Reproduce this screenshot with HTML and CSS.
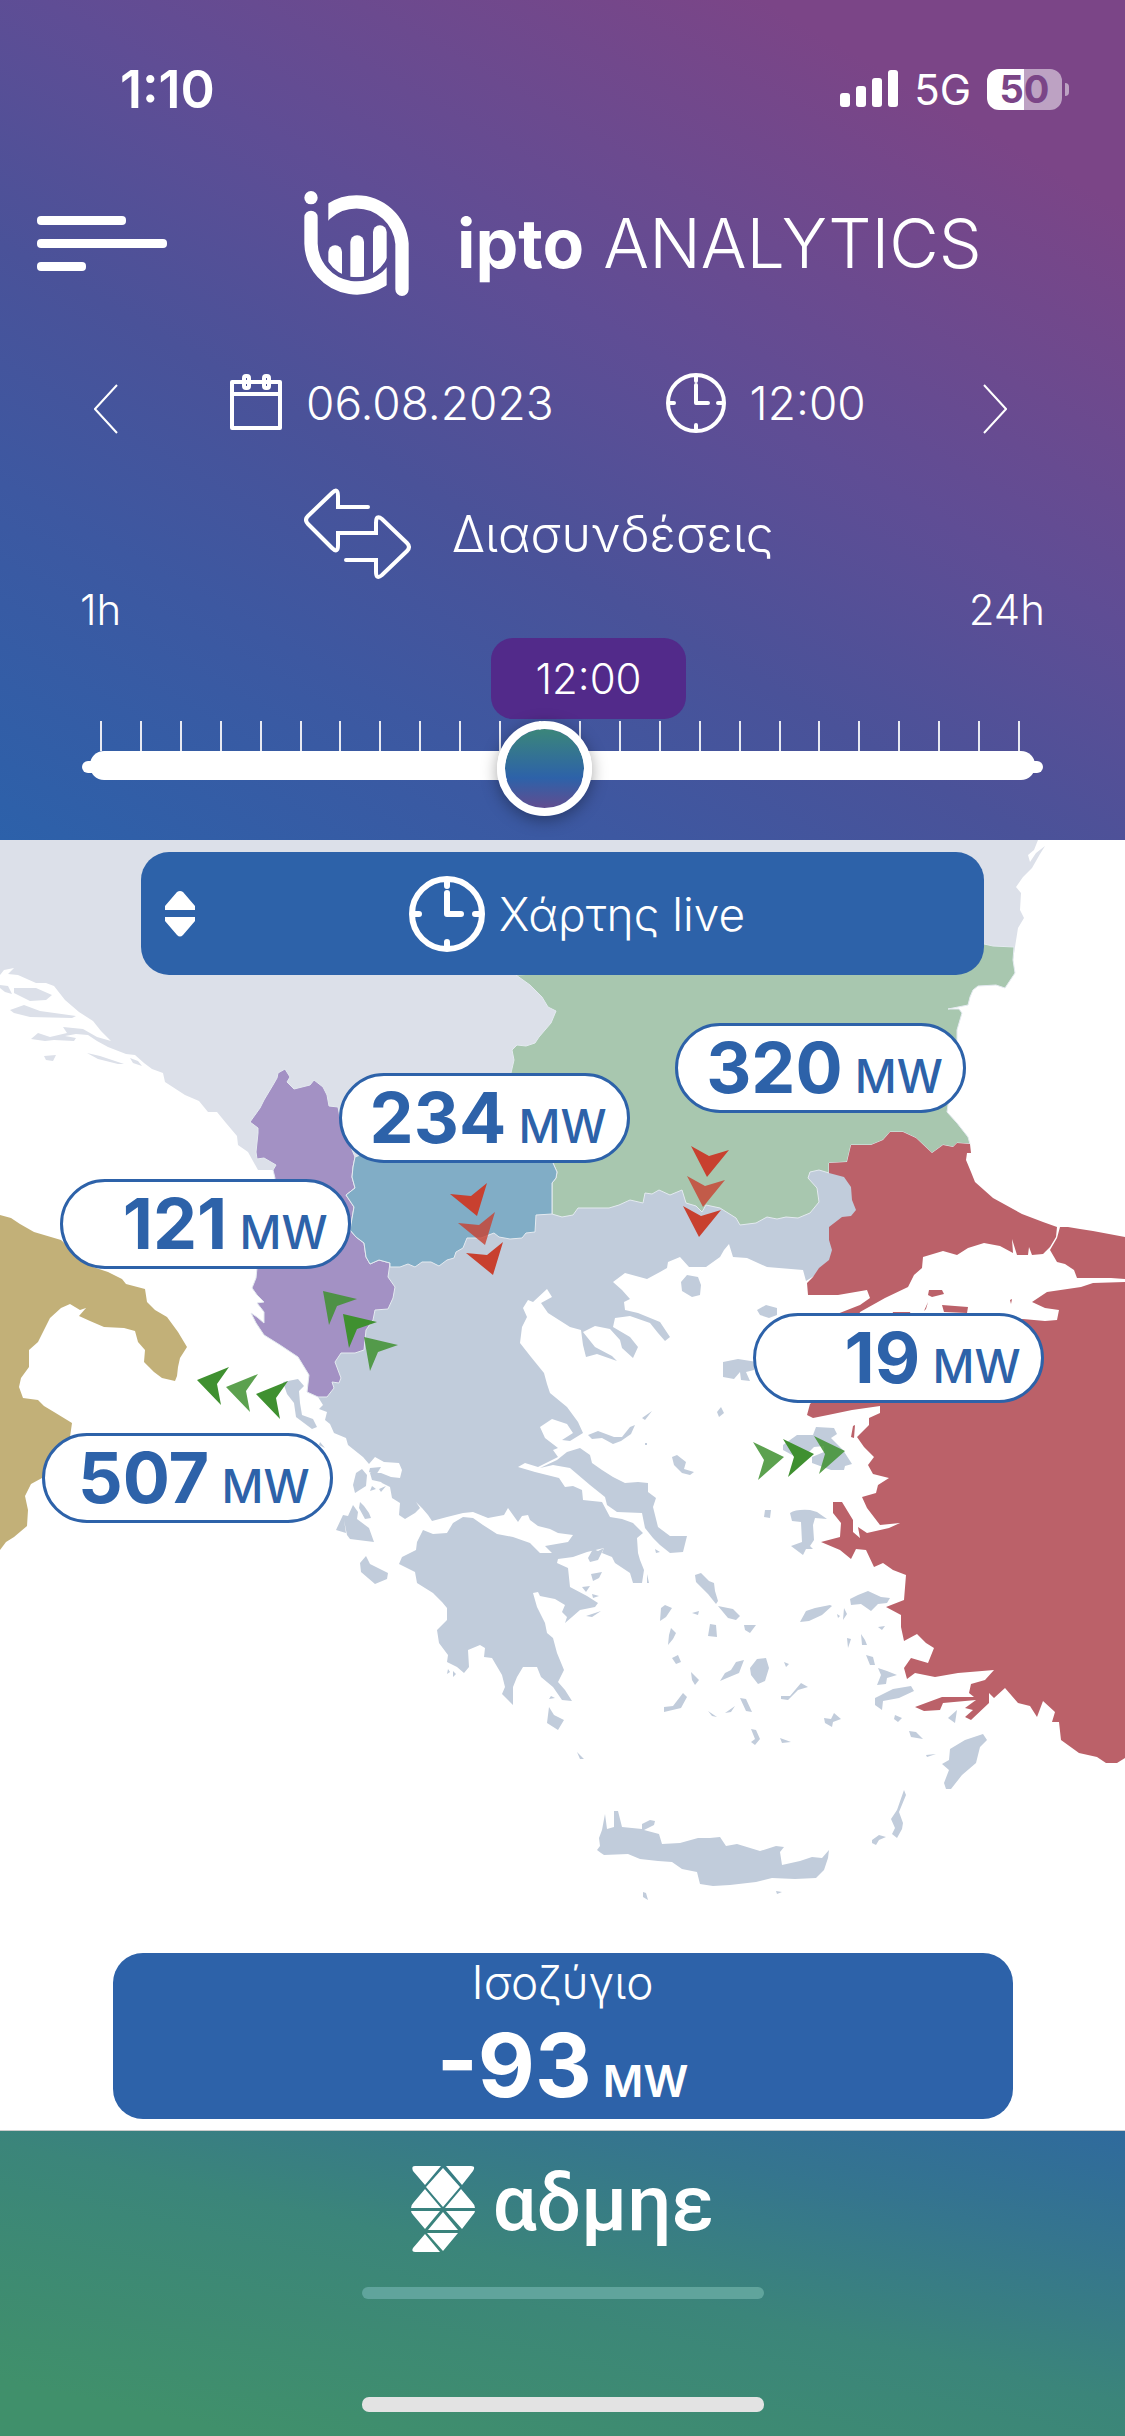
FILE: index.html
```html
<!DOCTYPE html>
<html lang="el">
<head>
  <meta charset="UTF-8" />
  <meta name="viewport" content="width=device-width, initial-scale=1.0" />
  <title>ipto ANALYTICS</title>
  <link rel="stylesheet" href="styles.css">
</head>
<body>
  <header class="header">
    <div class="status">
      <span class="status-time">1:10</span>
      <div class="status-right">
        <svg class="signal" viewBox="0 0 58 38" fill="#fff">
          <rect x="0" y="23" width="10" height="14" rx="3"/>
          <rect x="16" y="16" width="10" height="21" rx="3"/>
          <rect x="32" y="8" width="10" height="29" rx="3"/>
          <rect x="48" y="0" width="10" height="37" rx="3"/>
        </svg>
        <span class="network">5G</span>
        <span class="battery">50</span>
      </div>
    </div>

    <div class="brand">
      <button class="menu-btn" aria-label="Menu"><span></span><span></span><span></span></button>
      <svg class="brand-logo" viewBox="72 63 315 315">
        <defs>
          <clipPath id="stem"><rect x="60" y="100" width="260" height="300"/></clipPath>
          <clipPath id="arch"><rect x="145" y="50" width="260" height="350"/></clipPath>
          <clipPath id="bowl"><path d="M120 120H340V221H331A101 101 0 0 1 129 221H120Z"/></clipPath>
        </defs>
        <circle cx="93" cy="83" r="20" fill="#fff"/>
        <g fill="none" stroke="#fff" stroke-width="40" stroke-linecap="round">
          <path clip-path="url(#stem)" d="M93 142V221A137 137 0 0 0 360 260"/>
          <path clip-path="url(#arch)" d="M93 221A137 137 0 0 1 366 221V358"/>
        </g>
        <g fill="#fff" clip-path="url(#bowl)">
          <rect x="145" y="226" width="41" height="120" rx="20"/>
          <rect x="211" y="196" width="41" height="150" rx="20"/>
          <rect x="279" y="166" width="41" height="180" rx="20"/>
        </g>
      </svg>
      <h1><b>ipto</b> ANALYTICS</h1>
    </div>

    <nav class="date-nav">
      <button class="chevron" aria-label="Previous">
        <svg viewBox="0 0 24 50"><path d="M23 1 1 25 23 49"/></svg>
      </button>
      <button class="pick date">
        <svg class="icon-cal" viewBox="0 0 52 58">
          <path d="M2 8H50V54H2ZM2 20H50"/>
          <rect x="14" y="2" width="5" height="12" rx="2"/>
          <rect x="34" y="2" width="5" height="12" rx="2"/>
        </svg>
        06.08.2023
      </button>
      <button class="pick time">
        <svg class="icon-clock" viewBox="0 0 60 60">
          <circle cx="30" cy="30" r="28"/>
          <path d="M30 3V8M30 52V57M3 30H8M52 30H57M30 12V30H42"/>
        </svg>
        12:00
      </button>
      <button class="chevron next" aria-label="Next">
        <svg viewBox="0 0 24 50"><path d="M1 1 23 25 1 49"/></svg>
      </button>
    </nav>

    <div class="section-title">
      <svg viewBox="304 489 108 92">
        <path d="M368 508H338V497Q338 488 332 494L308 517Q304 521 308 525L332 549Q338 555 338 546V534H376V524Q376 515 382 520L407 544Q411 548 407 552L382 576Q376 581 376 573V561H346"/>
      </svg>
      <h2>Διασυνδέσεις</h2>
    </div>

    <div class="slider">
      <div class="slider-labels"><span>1h</span><span>24h</span></div>
      <output class="bubble" for="hour">12:00</output>
      <div class="ticks"></div>
      <div class="track">
        <input type="range" id="hour" min="1" max="24" value="12" aria-label="Ώρα">
      </div>
    </div>
  </header>

  <main class="map">
    <svg class="map-svg" viewBox="0 840 1125 1290">
      <!-- neighbours to the north -->
      <g fill="#dce0e9">
        <path d="M0 840H1038L1034 850 1028 855 1030 862 1036 853 1045 846 1040 854 1032 868 1023 877 1016 887 1021 893 1020 910 1024 918 1018 928 1015 947 1010 980H600V1170H258L248 1152 238 1145 237 1136 226 1123 217 1112 208 1112 199 1101 185 1095 165 1082 163 1073 152 1069 144 1063 135 1055 126 1054 108 1047 97 1041 88 1035 76 1034 65 1036 76 1038 74 1041 54 1040 45 1041 31 1039 38 1033 50 1037 67 1033 63 1027 83 1029 97 1037 111 1041 101 1031 93 1021 79 1012 65 1000 54 986 46 983 36 983 18 975 8 974 14 968 4 970 0 975Z"/>
        <path d="M0 985 8 986 12 994 5 992 0 988ZM14 988 36 988 52 995 46 1000 30 1001 14 993ZM10 1010 24 1005 40 1011 76 1016 72 1018 30 1017 14 1013ZM44 1056 56 1055 53 1061 46 1060ZM87 1053 100 1056 124 1064 118 1064 98 1059ZM130 1058 138 1061 142 1066 133 1063Z"/>
      </g>

      <!-- Italy -->
      <path fill="#c2b078" d="M0 1215 11 1218 20 1224 34 1232 61 1240 72 1250 93 1267 108 1272 122 1279 126 1284 145 1289 147 1302 155 1310 167 1317 178 1332 187 1347 180 1358 178 1367 177 1376 175 1381 162 1378 154 1372 144 1362 145 1350 138 1342 135 1331 124 1328 104 1327 90 1321 79 1316 86 1308 80 1310 70 1304 61 1308 50 1318 38 1342 29 1350 29 1367 21 1378 19 1387 23 1398 38 1400 44 1406 54 1412 72 1423 70 1437 60 1462 42 1478 31 1484 25 1496 28 1510 27 1526 14 1537 6 1542 0 1550Z"/>

      <!-- Greece, mainland -->
      <path fill="#c1ccdb" d="M318 1397 323 1405 319 1409 327 1412 325 1420 330 1424 334 1433 346 1438 348 1445 363 1457 369 1464 375 1457 384 1462 399 1463 402 1470 400 1478 391 1477 381 1473 370 1473 372 1480 381 1482 382 1483 390 1487 392 1498 400 1503 399 1515 405 1519 415 1513 420 1508 416 1502 422 1508 428 1515 432 1521 447 1517 463 1513 473 1512 488 1518 504 1515 508 1508 513 1515 518 1522 522 1516 528 1515 530 1520 538 1526 550 1529 558 1533 573 1535 568 1542 545 1546 552 1553 540 1553 530 1543 513 1537 497 1534 483 1525 473 1518 463 1517 453 1523 447 1533 433 1534 423 1530 417 1542 416 1550 402 1557 399 1564 415 1572 417 1583 433 1593 442 1602 447 1608 447 1620 437 1630 439 1643 448 1655 447 1662 457 1667 464 1673 469 1667 468 1650 480 1645 485 1648 484 1657 492 1658 502 1675 505 1687 502 1694 513 1705 513 1687 517 1677 523 1667 537 1667 541 1677 553 1687 562 1700 572 1701 565 1690 558 1682 564 1670 557 1653 553 1638 547 1633 545 1623 537 1607 533 1593 538 1592 540 1596 555 1599 565 1605 562 1612 567 1617 565 1623 572 1617 580 1610 595 1607 598 1603 587 1596 570 1587 568 1568 557 1563 558 1559 573 1557 587 1552 604 1548 602 1553 612 1557 615 1563 630 1573 633 1583 642 1583 644 1570 640 1560 638 1553 637 1538 643 1533 633 1523 622 1519 610 1517 602 1502 583 1500 582 1490 573 1486 565 1487 559 1478 535 1472 518 1467 525 1463 538 1467 558 1457 553 1450 558 1448 545 1438 540 1427 552 1419 567 1424 573 1433 562 1440 570 1441 583 1433 578 1422 567 1407 550 1393 547 1384 544 1373 531 1357 520 1343 522 1327 527 1317 523 1308 528 1300 533 1302 547 1289 552 1297 541 1303 548 1313 570 1327 581 1330 583 1345 586 1357 597 1354 617 1361 612 1356 595 1347 583 1332 595 1326 610 1329 620 1340 622 1348 633 1358 638 1347 630 1337 613 1327 615 1318 630 1316 650 1323 658 1333 665 1341 670 1337 660 1322 638 1313 625 1310 624 1302 630 1299 622 1290 613 1282 625 1273 647 1279 660 1272 667 1268 668 1262 680 1257 689 1267 706 1267 720 1257 724 1250 729 1244 733 1257 747 1258 767 1267 803 1270 806 1281 840 1260 880 1200 870 1160 560 1150 380 1220 330 1330Z"/>

      <!-- Evia -->
      <path fill="#c1ccdb" d="M540 1468 557 1460 567 1452 580 1448 590 1455 592 1463 602 1470 613 1477 625 1483 638 1482 648 1483 648 1492 656 1498 653 1507 658 1527 670 1536 687 1536 683 1552 670 1553 660 1545 653 1538 645 1528 642 1513 617 1512 607 1505 605 1497 590 1485 570 1468 553 1465Z"/>

      <!-- islands -->
      <g fill="#c1ccdb">
        <path d="M605 1814 602 1830 599 1838 600 1846 597 1850 601 1853 604 1855 628 1854 640 1859 658 1861 672 1862 682 1869 697 1872 700 1884 713 1886 730 1885 756 1882 772 1878 795 1879 816 1878 824 1870 828 1858 829 1850 822 1858 812 1857 800 1861 782 1865 780 1852 784 1847 776 1846 760 1851 737 1844 726 1846 720 1837 710 1838 698 1838 680 1843 662 1844 659 1834 644 1830 654 1825 655 1821 650 1820 642 1824 642 1829 622 1827 618 1811 614 1811 614 1827 607 1829Z"/>
        <path d="M283 1382 298 1379 304 1386 299 1391 300 1403 302 1415 313 1419 317 1427 312 1429 296 1417 294 1403 287 1394ZM320 1442 325 1448 319 1445Z"/>
        <path d="M362 1469 367 1475 366 1486 355 1493 353 1485 356 1473ZM370 1468 381 1467 376 1475 369 1472ZM372 1486 376 1489 370 1491ZM379 1489 386 1486 381 1492ZM360 1502 364 1506 369 1513 371 1518 365 1519 359 1508ZM353 1505 358 1512 357 1519 369 1528 374 1542 350 1539 347 1535 344 1520 346 1533 336 1530 343 1515 348 1516Z"/>
        <path d="M366 1556 370 1564 388 1573 387 1579 375 1584 361 1572 360 1563ZM448 1669 450 1672 447 1674ZM453 1671 456 1674 453 1677ZM551 1696 555 1698 549 1699ZM549 1707 554 1715 564 1720 558 1730 547 1723ZM577 1752 584 1759 580 1759Z"/>
        <path d="M588 1435 598 1431 614 1437 622 1437 630 1427 635 1425 631 1434 621 1441 613 1444 602 1438 592 1439ZM642 1418 652 1411 645 1420ZM672 1457 677 1455 686 1462 684 1469 694 1472 690 1475 682 1473 674 1465ZM717 1412 721 1407 724 1413 719 1417ZM645 1443h2v2h-2Z"/>
        <path d="M681 1282 687 1275 698 1277 701 1285 700 1295 692 1297 682 1291ZM757 1310 766 1305 777 1308 777 1315 769 1318 760 1315ZM723 1362 738 1359 757 1362 754 1370 746 1372 750 1381 741 1380 740 1372 734 1379 723 1377Z"/>
        <path d="M783 1445 797 1435 813 1435 816 1427 834 1428 837 1434 831 1438 843 1450 852 1464 845 1466 844 1470 831 1470 812 1463 812 1457 824 1452 824 1446 814 1447 806 1455 794 1456 783 1450Z"/>
        <path d="M790 1513Q796 1509 810 1510L817 1512 827 1519 815 1518 813 1525 814 1540 810 1546 813 1549 806 1549 803 1555 791 1546 802 1542 801 1522 792 1521ZM765 1510 771 1510 770 1518 764 1517Z"/>
        <path d="M695 1575 701 1573 709 1581 714 1583 715 1591 718 1601 716 1604 708 1594 696 1582ZM718 1606 733 1609 740 1616 736 1620 728 1618ZM665 1605 672 1608 666 1617 660 1621 661 1608ZM692 1613 699 1611 698 1615ZM710 1624 716 1625 717 1637 708 1636ZM744 1625 756 1625 750 1633 745 1630ZM671 1628 676 1633 673 1639 668 1645 669 1635ZM672 1658 678 1655 681 1662 676 1664ZM691 1672 699 1680 695 1685 692 1680Z"/>
        <path d="M725 1673 731 1670 736 1662 744 1660 739 1673 727 1678 720 1681ZM750 1668 757 1659 766 1658 769 1668 765 1681 758 1684 751 1675ZM664 1707 673 1706 683 1693 687 1697 681 1708 664 1712ZM708 1711 717 1717 712 1716ZM725 1713 735 1706 731 1712ZM740 1698 746 1699 752 1712 746 1711ZM781 1696 790 1696 801 1683 808 1687 798 1690 788 1700 781 1699ZM784 1662 789 1664 786 1667ZM751 1729 756 1730 760 1739 755 1745 751 1742 755 1739ZM780 1738 791 1742 782 1743ZM824 1718 831 1719 834 1713 841 1719 833 1722 832 1727 825 1723Z"/>
        <path d="M800 1622 806 1611 815 1608 830 1605 832 1606 822 1615 809 1621ZM850 1599 858 1595 868 1591 881 1597 890 1598 887 1603 878 1604 871 1611 861 1604 851 1605ZM844 1608 847 1614 843 1620ZM837 1614 840 1616 838 1618ZM847 1638 851 1639 848 1648ZM861 1634 865 1640 867 1645 862 1645ZM878 1627 885 1626 882 1630ZM866 1655 873 1657 875 1665 870 1665ZM878 1668 887 1671 897 1675 887 1678 886 1684 877 1685 881 1675ZM875 1698 893 1689 911 1686 914 1691 899 1698 883 1701 882 1710 875 1705ZM895 1715 902 1718 898 1722 894 1719ZM909 1731 916 1732 923 1739 911 1737ZM948 1718 957 1710 955 1723Z"/>
        <path d="M950 1749 965 1740 983 1734 987 1740 980 1747 976 1763 962 1775 951 1789 946 1789 944 1783 949 1770 942 1764 949 1760ZM926 1755 936 1754 927 1757ZM904 1790 906 1795 899 1812 903 1823 902 1829 897 1838 892 1834 895 1828 891 1819 897 1810ZM872 1840 879 1835 886 1837 879 1840 876 1845 872 1843ZM643 1892 646 1893 648 1900 643 1897ZM776 1891 782 1892 777 1894Z"/>
        <path d="M588 1558 593 1549 598 1551 604 1548 598 1560 590 1562ZM591 1574 602 1572 599 1578 593 1581ZM582 1587 590 1586 586 1592ZM592 1594 599 1596 593 1598ZM586 1616 601 1611 592 1617ZM647 1574 649 1583 647 1583ZM655 1549 660 1552 656 1553Z"/>
      </g>

      <g stroke="#e4eaf0" stroke-width="1" stroke-linejoin="round">
        <!-- Bulgaria -->
        <path fill="#a8c7af" d="M516 975 530 985 542 997 548 1007 556 1011 551 1023 539 1037 535 1043 526 1046 517 1045 512 1050 514 1060 511 1073 545 1150 553 1163 557 1172 556 1178 552 1183 552 1214 562 1217 573 1215 578 1208 591 1208 609 1208 619 1205 630 1200 643 1203 645 1193 652 1194 659 1190 670 1195 682 1190 686 1203 696 1206 702 1212 706 1205 720 1208 736 1218 740 1225 756 1223 767 1217 777 1219 786 1217 798 1218 810 1213 819 1202 817 1188 808 1178 810 1172 819 1170 829 1173 829 1163 847 1162 851 1145 871 1145 883 1140 890 1132 903 1132 916 1138 932 1153 943 1145 953 1147 957 1143 970 1144 968 1137 957 1123 947 1112 957 1040 957 1030 962 1013 959 1009 948 1009 968 1005 970 997 973 990 978 986 996 985 1005 988 1015 973 1013 960 1014 947 993 946 984 944 900 955Z"/>
        <!-- Albania -->
        <path fill="#a391c4" d="M285 1069 290 1077 287 1082 294 1089 302 1087 310 1085 314 1080 323 1087 327 1095 329 1106 338 1107 341 1123 355 1157 353 1167 352 1177 355 1188 346 1195 354 1207 350 1230 356 1237 364 1243 366 1257 370 1264 379 1260 390 1263 388 1277 395 1287 393 1298 388 1309 375 1310 373 1320 366 1330 364 1350 355 1353 341 1353 335 1362 341 1378 339 1383 332 1382 334 1388 327 1397 318 1397 307 1392 309 1375 298 1357 280 1345 264 1335 256 1323 251 1313 257 1317 264 1323 264 1312 257 1303 264 1302 257 1295 252 1288 256 1278 257 1268 268 1220 275 1178 273 1170 276 1165 264 1158 257 1159 256 1152 258 1133 258 1128 250 1122 260 1108 264 1100 273 1085 277 1078 278 1073Z"/>
        <!-- North Macedonia -->
        <path fill="#81adc6" d="M355 1157 400 1140H540L553 1163 557 1172 556 1178 552 1183 552 1214 536 1215 535 1232 526 1233 522 1238 510 1239 499 1237 494 1233 481 1238 467 1238 463 1248 456 1252 454 1258 447 1260 439 1266 431 1262 422 1262 415 1267 408 1264 400 1267 390 1267 390 1263 379 1260 370 1264 366 1257 364 1243 356 1237 350 1230 354 1207 346 1195 355 1188 352 1177 353 1167Z"/>
      </g>

      <!-- Turkey -->
      <g fill="#bb6169">
        <path d="M829 1163 847 1162 851 1145 871 1145 883 1140 890 1132 903 1132 916 1138 932 1153 943 1145 953 1147 957 1143 970 1144 971 1153 967 1153 966 1160 971 1172 975 1182 993 1198 1022 1214 1043 1222 1057 1227 1056 1237 1050 1247 1043 1254 1032 1255 1029 1247 1028 1255 1017 1255 1012 1239 1013 1253 1000 1246 984 1243 968 1248 957 1255 943 1251 923 1257 922 1268 914 1275 908 1287 885 1298 860 1312 858 1318 832 1316 860 1305 870 1298 867 1290 838 1295 808 1295 807 1283 813 1277 819 1268 829 1260 832 1250 829 1240 829 1227 842 1217 851 1216 856 1210 852 1200 851 1187 844 1177 829 1173Z"/>
        <path d="M1060 1227 1068 1227 1080 1229 1093 1231 1125 1237V1279L1111 1278 1077 1278 1074 1270 1065 1264 1057 1262 1050 1250 1057 1238Z"/>
        <path d="M1125 1282 1093 1283 1081 1287 1047 1292 1032 1302 1045 1308 1059 1310 1057 1320 1045 1321 1023 1319 900 1330 810 1404 807 1415 813 1418 828 1415 852 1410 880 1406 880 1413 869 1418 869 1425 857 1437 864 1447 874 1457 868 1465 873 1474 889 1478 878 1485 876 1493 862 1497 867 1508 880 1525 900 1523 889 1528 867 1533 858 1527 860 1538 853 1532 853 1520 842 1502 833 1502 833 1513 841 1523 840 1537 821 1542 840 1550 851 1559 856 1549 866 1550 874 1567 883 1563 893 1570 906 1575 904 1600 886 1607 901 1615 901 1627 904 1641 917 1634 926 1643 934 1648 928 1663 911 1658 904 1668 907 1679 915 1673 935 1677 958 1673 994 1670 985 1680 971 1684 969 1693 974 1697 942 1697 915 1707 924 1711 940 1710 943 1703 976 1700 965 1708 973 1710 965 1717 971 1720 989 1703 989 1693 994 1698 1005 1688 1018 1703 1030 1706 1037 1717 1043 1701 1055 1712 1052 1722 1059 1722 1061 1740 1079 1753 1097 1757 1106 1763 1117 1763 1125 1758Z"/>
        <path d="M929 1290 942 1290 944 1294 932 1297 928 1295ZM924 1311 928 1302 926 1309ZM942 1305 968 1307 967 1313 944 1312ZM893 1312 910 1312 911 1315 892 1315ZM1010 1300 1012 1299 1011 1304ZM853 1426 855 1425 854 1438 851 1437Z"/>
      </g>

      <!-- flow direction arrows -->
      <g fill="#c8402f">
        <path d="M450 1194 471 1196 487 1183 477 1216Z"/>
        <path opacity=".8" d="M458 1223 479 1225 495 1212 485 1245Z"/>
        <path d="M466 1253 487 1255 503 1242 493 1275Z"/>
        <path d="M691 1146 709 1156 729 1150 707 1177Z"/>
        <path opacity=".8" d="M687 1176 705 1186 725 1180 703 1207Z"/>
        <path d="M683 1206 701 1216 721 1210 699 1237Z"/>
      </g>
      <g fill="#3f9030">
        <path opacity=".85" d="M323 1291 357 1299 337 1306 329 1325Z"/>
        <path d="M343 1314 377 1322 357 1329 349 1348Z"/>
        <path opacity=".85" d="M364 1337 398 1345 378 1352 370 1371Z"/>
        <path d="M197 1380 229 1367 217 1384 221 1405Z"/>
        <path opacity=".85" d="M226 1387 258 1374 246 1391 250 1412Z"/>
        <path d="M256 1394 288 1381 276 1398 280 1419Z"/>
        <path opacity=".85" d="M753 1442 784 1457 758 1480 764 1460Z"/>
        <path d="M783 1439 814 1454 788 1477 794 1457Z"/>
        <path opacity=".85" d="M814 1436 845 1451 819 1474 825 1454Z"/>
      </g>
    </svg>

    <div class="pin bulgaria"><b>320</b> MW</div>
    <div class="pin macedonia"><b>234</b> MW</div>
    <div class="pin albania"><b>121</b> MW</div>
    <div class="pin turkey"><b>19</b> MW</div>
    <div class="pin italy"><b>507</b> MW</div>

    <div class="map-overlay">
      <label class="map-picker">
        <svg class="updown" viewBox="0 0 30 46" fill="#fff">
          <path d="M0 15 12 1Q15-1 18 1L30 15V19H0ZM0 26H30V30L18 44Q15 47 12 44L0 30Z"/>
        </svg>
        <span class="picker-value">
          <svg class="icon-clock" viewBox="0 0 76 76">
            <circle cx="38" cy="38" r="35"/>
            <path d="M38 5V10M38 66V71M5 38H10M66 38H71M38 17V38H52"/>
          </svg>
          <select aria-label="Χάρτης">
            <option>Χάρτης live</option>
          </select>
        </span>
      </label>

      <section class="balance">
        <h3>Ισοζύγιο</h3>
        <p><b>-93</b> MW</p>
      </section>
    </div>
  </main>

  <footer class="footer">
    <div class="admie">
      <svg viewBox="0 0 64 87" fill="#fff">
        <path d="M4 0H30L14 19 2 5Q0 0 4 0ZM35 0H60Q65 0 62 5L51 19ZM32 2 49 21 32 41 15 21ZM14 23 30 42H0Q0 39 3 36ZM50 23 61 36Q64 39 64 42H34ZM0 45H29L14 63 3 50Q0 47 0 45ZM35 45H64Q64 47 61 50L51 63ZM32 46 47 64H17ZM14 68 29 86H4Q0 86 2 82ZM16 67H47L32 85Z"/>
      </svg>
      <span>αδμηε</span>
    </div>
    <div class="sheet-handle"></div>
    <div class="home-bar"></div>
  </footer>
</body>
</html>
```
FILE: styles.css
```css
* {
  box-sizing: border-box;
}
body {
  margin: 0;
  min-height: 100vh;
  display: flex;
  flex-direction: column;
  font-family: Inter, "Noto Sans", sans-serif;
  font-weight: 300;
  color: #fff;
  background: #fff;
}
h1, h2, h3, p {
  margin: 0;
  font-weight: 300;
}
button {
  padding: 0;
  border: none;
  background: none;
  color: inherit;
  font: inherit;
  cursor: pointer;
}
svg {
  display: block;
  flex: none;
}

/* header */
.header {
  height: 840px;
  background: linear-gradient(30deg, #2c61aa 0%, #3d58a1 24%, #4a5299 40%, #5f4d95 58%, #6b4a8f 70%, #7b4587 86%);
}
.status {
  display: flex;
  justify-content: space-between;
  align-items: center;
  height: 121px;
  padding: 57px 56px 0 120px;
}
.status-time {
  font-size: 52px;
  font-weight: 600;
}
.status-right {
  display: flex;
  align-items: center;
  gap: 16px;
}
.signal {
  width: 58px;
  height: 38px;
}
.network {
  font-size: 42px;
  font-weight: 400;
}
.battery {
  position: relative;
  width: 75px;
  margin-right: 7px;
  border-radius: 12px;
  background: linear-gradient(90deg, #fff 50%, rgba(255, 255, 255, 0.5) 50%);
  color: #7b4587;
  font-size: 38px;
  font-weight: 700;
  line-height: 41px;
  text-align: center;
}
.battery::after {
  content: "";
  position: absolute;
  right: -7px;
  top: 14px;
  width: 4px;
  height: 13px;
  border-radius: 0 4px 4px 0;
  background: rgba(255, 255, 255, 0.5);
}

.brand {
  display: flex;
  align-items: center;
  margin-top: 70px;
  padding-left: 37px;
}
.menu-btn {
  display: flex;
  flex-direction: column;
  gap: 14px;
  width: 130px;
  margin-right: 137px;
}
.menu-btn span {
  height: 9px;
  border-radius: 4px;
  background: #fff;
}
.menu-btn span:first-child {
  width: 89px;
}
.menu-btn span:last-child {
  width: 49px;
}
.brand-logo {
  width: 105px;
  height: 105px;
  margin-right: 48px;
}
.brand h1 {
  font-size: 68px;
  line-height: 105px;
  white-space: nowrap;
}
.brand h1 b {
  font-weight: 700;
}

.date-nav {
  display: flex;
  align-items: flex-end;
  margin-top: 76px;
  padding: 0 118px 0 94px;
}
.chevron svg {
  width: 24px;
  height: 50px;
  fill: none;
  stroke: #fff;
  stroke-width: 2;
}
.next {
  margin-left: auto;
}
.pick {
  display: flex;
  align-items: center;
  gap: 24px;
  height: 62px;
  margin-left: 112px;
  font-size: 46px;
  line-height: 60px;
}
.icon-cal,
.icon-clock {
  fill: none;
  stroke: #fff;
  stroke-width: 4;
  stroke-linecap: round;
  stroke-linejoin: round;
}
.icon-cal {
  width: 52px;
  height: 58px;
}
.date-nav .icon-clock {
  width: 60px;
  height: 60px;
}

.section-title {
  display: flex;
  align-items: center;
  gap: 40px;
  margin-top: 54px;
  padding-left: 304px;
}
.section-title svg {
  width: 108px;
  height: 92px;
  fill: none;
  stroke: #fff;
  stroke-width: 4;
  stroke-linecap: round;
}
.section-title h2 {
  font-size: 50px;
  line-height: 92px;
}

.slider {
  padding: 0 80px;
}
.slider-labels {
  display: flex;
  justify-content: space-between;
  padding-top: 2px;
  font-size: 42px;
  line-height: 56px;
}
.bubble {
  display: block;
  width: 195px;
  margin: 0 auto 2px 411px;
  border-radius: 22px;
  background: #522a8a;
  font-size: 42px;
  line-height: 81px;
  text-align: center;
}
.ticks {
  height: 30px;
  margin: 0 25px 0 20px;
  background: repeating-linear-gradient(90deg, #e8eaf2 0 2px, transparent 2px calc((100% - 2px) / 23));
}
.track {
  position: relative;
  height: 29px;
  margin: 0 10px;
  border-radius: 14px;
  background: #fff;
}
.track::before {
  content: "";
  position: absolute;
  left: -8px;
  right: -8px;
  top: 10px;
  height: 12px;
  border-radius: 6px;
  background: #fff;
}
.track input {
  -webkit-appearance: none;
  appearance: none;
  position: absolute;
  left: -34px;
  top: -30px;
  width: calc(100% + 72px);
  height: 95px;
  margin: 0;
  background: none;
}
.track input::-webkit-slider-thumb {
  -webkit-appearance: none;
  width: 95px;
  height: 95px;
  border: 8px solid #fff;
  border-radius: 50%;
  background: linear-gradient(#3d8c72, #2d62a9 60%, #6f4789) border-box;
  background-clip: padding-box;
  box-shadow: 0 4px 16px rgba(0, 0, 0, 0.35);
}

/* map */
.map {
  position: relative;
  display: grid;
  border-bottom: 1px solid #ccc;
}
.map-svg,
.map-overlay {
  grid-area: 1 / 1;
}
.map-svg {
  width: 100%;
  height: auto;
}
.map-overlay {
  display: flex;
  flex-direction: column;
  justify-content: space-between;
  align-items: center;
  padding: 12px 0 11px;
}
.map-picker {
  display: flex;
  align-items: center;
  width: 75%;
  height: 123px;
  padding: 0 24px;
  border-radius: 28px;
  background: #2d62a9;
}
.updown {
  width: 30px;
  height: 46px;
}
.picker-value {
  flex: 1;
  display: flex;
  justify-content: center;
  align-items: center;
  gap: 14px;
}
.map-picker .icon-clock {
  width: 76px;
  height: 76px;
  stroke-width: 6;
}
.map-picker select {
  -webkit-appearance: none;
  appearance: none;
  padding: 0;
  border: none;
  background: none;
  color: #fff;
  font: inherit;
  font-size: 46px;
}
.pin {
  position: absolute;
  width: 291px;
  height: 90px;
  padding-right: 20px;
  border: 3px solid #2d62a9;
  border-radius: 45px;
  background: #fff;
  color: #2d62a9;
  font-size: 46px;
  font-weight: 500;
  line-height: 84px;
  text-align: right;
  white-space: nowrap;
}
.pin b {
  font-size: 70px;
  font-weight: 700;
}
.bulgaria { left: 60%; top: 14.2%; }
.macedonia { left: 30.1%; top: 18.1%; }
.albania { left: 5.3%; top: 26.3%; }
.turkey { left: 66.9%; top: 36.7%; }
.italy { left: 3.7%; top: 46%; }

.balance {
  width: 80%;
  height: 166px;
  border-radius: 30px;
  background: #2d62a9;
  text-align: center;
}
.balance h3 {
  font-size: 46px;
  line-height: 58px;
}
.balance p {
  font-size: 44px;
  font-weight: 600;
  line-height: 108px;
}
.balance b {
  font-size: 88px;
  font-weight: 700;
}

/* footer */
.footer {
  flex: 1;
  display: flex;
  flex-direction: column;
  align-items: center;
  padding: 35px 0 24px;
  background: linear-gradient(13deg, #40906b 10%, #3b857a 52%, #35758e 78%, #2f6a9d 100%);
}
.admie {
  display: flex;
  gap: 18px;
}
.admie svg {
  width: 64px;
  height: 87px;
}
.admie span {
  font-family: Roboto, sans-serif;
  font-size: 78px;
  font-weight: 500;
  line-height: 76px;
}
.sheet-handle {
  width: 402px;
  height: 12px;
  margin-top: 34px;
  border-radius: 6px;
  background: #60a49c;
}
.home-bar {
  width: 402px;
  height: 15px;
  margin-top: auto;
  border-radius: 7px;
  background: #e3e3e3;
}
```
